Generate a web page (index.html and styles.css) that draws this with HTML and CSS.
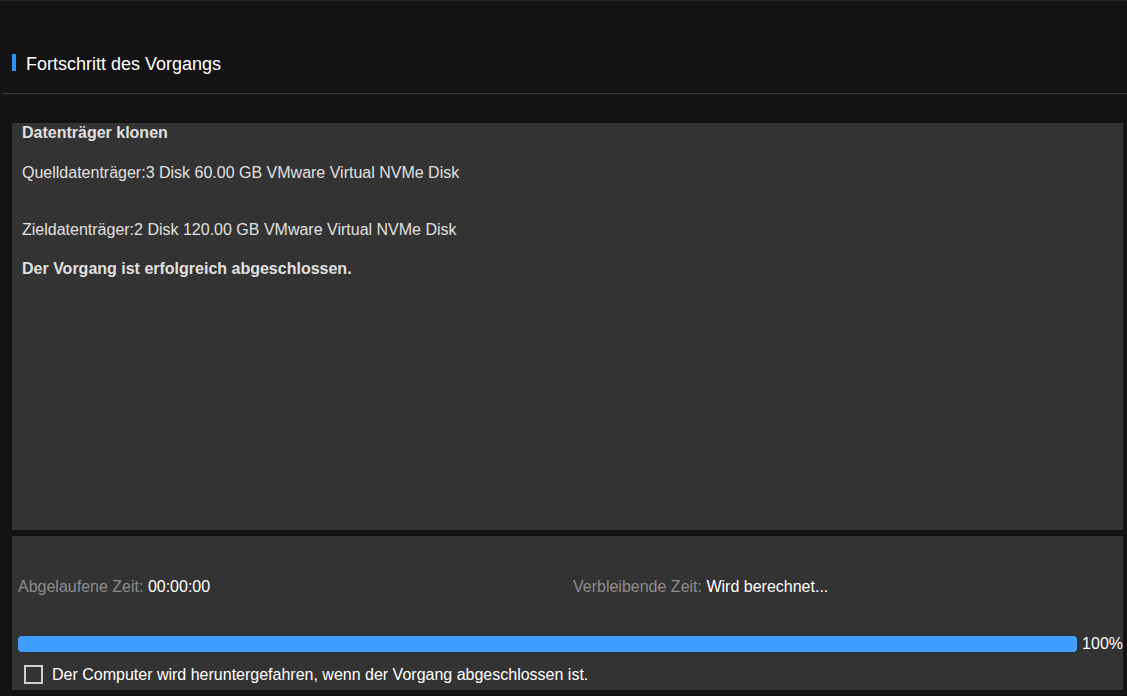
FILE: index.html
```html
<!DOCTYPE html>
<html lang="de">
<head>
  <meta charset="UTF-8" />
  <meta name="viewport" content="width=device-width, initial-scale=1.0" />
  <title>Fortschritt des Vorgangs</title>
  <link rel="stylesheet" href="styles.css">
</head>
<body>
  <div class="page-header">
    <span class="header-mark"></span>
    <h2 class="page-title">Fortschritt des Vorgangs</h2>
  </div>

  <!-- Operation details -->
  <div class="panel log-panel">
    <div class="log-line bold">Datenträger klonen</div>
    <div class="log-line source">Quelldatenträger:3 Disk 60.00 GB VMware Virtual NVMe Disk</div>
    <div class="log-line target">Zieldatenträger:2 Disk 120.00 GB VMware Virtual NVMe Disk</div>
    <div class="log-line result bold">Der Vorgang ist erfolgreich abgeschlossen.</div>
  </div>

  <!-- Time and progress -->
  <div class="panel status-panel">
    <div class="time-row">
      <div><span class="time-label">Abgelaufene Zeit:</span> <span class="time-value">00:00:00</span></div>
      <div><span class="time-label">Verbleibende Zeit:</span> <span class="time-value">Wird berechnet...</span></div>
    </div>
    <div class="progress-row">
      <div class="progress-track"><div class="progress-fill" style="width: 100%"></div></div>
      <span class="progress-text">100%</span>
    </div>
    <label class="shutdown-option">
      <span class="checkbox"></span>
      Der Computer wird heruntergefahren, wenn der Vorgang abgeschlossen ist.
    </label>
  </div>
</body>
</html>
```

FILE: styles.css
```css
body {
  margin: 0;
  background: #131313;
  border-top: 1px solid #242424;
  color: #e0e0e0;
  font-family: 'Liberation Sans', Arial, sans-serif;
  font-size: 16px;
}
/* Header with blue marker and divider */
.page-header {
  display: flex;
  align-items: flex-start;
  margin-left: 2px;
  padding: 53px 0 20px 10px;
  border-bottom: 1px solid #3a3a3a;
}
.header-mark {
  width: 4px;
  height: 17px;
  background: #2f8ff5;
}
.page-title {
  margin: 1px 0 0 10px;
  font-size: 18px;
  line-height: 18px;
  font-weight: normal;
  color: #fff;
}
.panel {
  background: #333333;
  margin: 0 4px 0 12px;
}
.log-panel {
  margin-top: 29px;
  height: 407px;
  padding: 1px 10px 0 10px;
  box-sizing: border-box;
}
.log-line {
  line-height: 18px;
}
.log-line.bold {
  font-weight: bold;
}
.log-line.source {
  margin-top: 22px;
}
.log-line.target {
  margin-top: 39px;
}
.log-line.result {
  margin-top: 21px;
}
.status-panel {
  margin-top: 6px;
  padding: 42px 0 6px 6px;
}
.time-row {
  display: grid;
  grid-template-columns: 555px 1fr;
  line-height: 18px;
}
.time-label {
  color: #8c8c8c;
}
.time-value {
  color: #fff;
}
.progress-row {
  display: flex;
  align-items: center;
  gap: 5px;
  margin-top: 40px;
}
.progress-track {
  flex: 1;
  height: 16px;
  border-radius: 3px;
  background: #1f1f1f;
  overflow: hidden;
}
.progress-fill {
  height: 100%;
  background: #409eff;
  border-radius: 3px;
}
.progress-text {
  color: #fff;
  line-height: 16px;
}
.shutdown-option {
  display: flex;
  align-items: center;
  gap: 9px;
  margin: 12px 0 0 6px;
  padding-top: 1px;
  color: #fff;
  line-height: 19px;
}
.checkbox {
  width: 15px;
  height: 15px;
  border: 2px solid #d0d0d0;
}
```
